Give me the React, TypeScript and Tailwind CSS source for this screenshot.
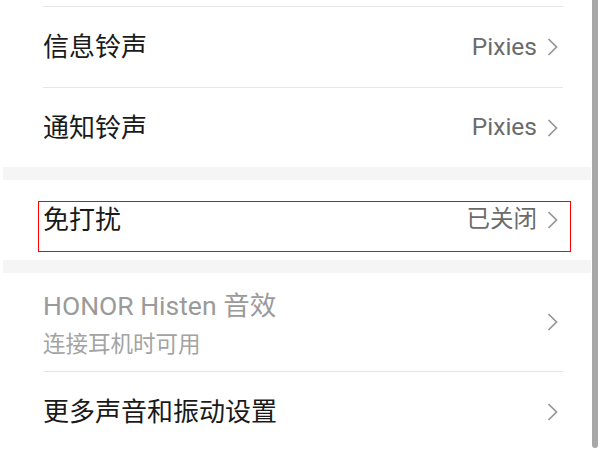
import React from "react";

const font = { fontFamily: 'Roboto, "Noto Sans CJK SC", sans-serif' };

function Chevron() {
  return (
    <svg width="13" height="20" viewBox="0 0 13 20" className="shrink-0 ml-[9px] block">
      <path d="M2.5 2 L10.5 10 L2.5 18" fill="none" stroke="#959595" strokeWidth="1.7" />
    </svg>
  );
}

function Row({ title, value, h = 80, valueSize = "text-[24.5px]" }: { title: string; value?: string; h?: number; valueSize?: string }) {
  return (
    <div className="flex items-center pl-[40px] pr-[32px] shrink-0" style={{ height: h }}>
      <div className="flex-1 text-[26px] text-[#1a1a1a] leading-none">{title}</div>
      {value && <div className={`${valueSize} text-[#6b6b6b] leading-none`}>{value}</div>}
      <Chevron />
    </div>
  );
}

function Divider() {
  return <div className="h-px bg-[#e6e6e6] ml-[40px] mr-[28px] shrink-0" />;
}

export default function App() {
  return (
    <div className="w-[600px] h-[450px] overflow-hidden bg-white grid grid-cols-[3px_588px_1px_6px_2px]" style={font}>
      <div />
      <div className="flex flex-col">
        <div className="h-[6px] shrink-0" />
        <Divider />
        <Row title="信息铃声" value="Pixies" />
        <Divider />
        <Row title="通知铃声" value="Pixies" h={79} />
        <div className="h-[13px] bg-[#f5f5f5] shrink-0" />
        <div className="relative shrink-0">
          <Row title="免打扰" value="已关闭" valueSize="text-[23.5px]" />
          <div className="absolute left-[35px] top-[21px] w-[533px] h-[51px] border-[1.5px] border-[#ff0000]" />
        </div>
        <div className="h-[13px] bg-[#f5f5f5] shrink-0" />
        <div className="h-[98px] shrink-0 flex items-center pl-[40px] pr-[32px]">
          <div className="flex-1 flex flex-col pt-[4px]">
            <div className="text-[26.5px] text-[#9a9a9a] leading-none">HONOR Histen 音效</div>
            <div className="text-[22.5px] text-[#a3a3a3] leading-none mt-[13px]">连接耳机时可用</div>
          </div>
          <Chevron />
        </div>
        <Divider />
        <Row title="更多声音和振动设置" />
      </div>
      <div />
      <div className="h-[448px] bg-[#a8a8a8] rounded-b-[3px]" />
      <div />
    </div>
  );
}
